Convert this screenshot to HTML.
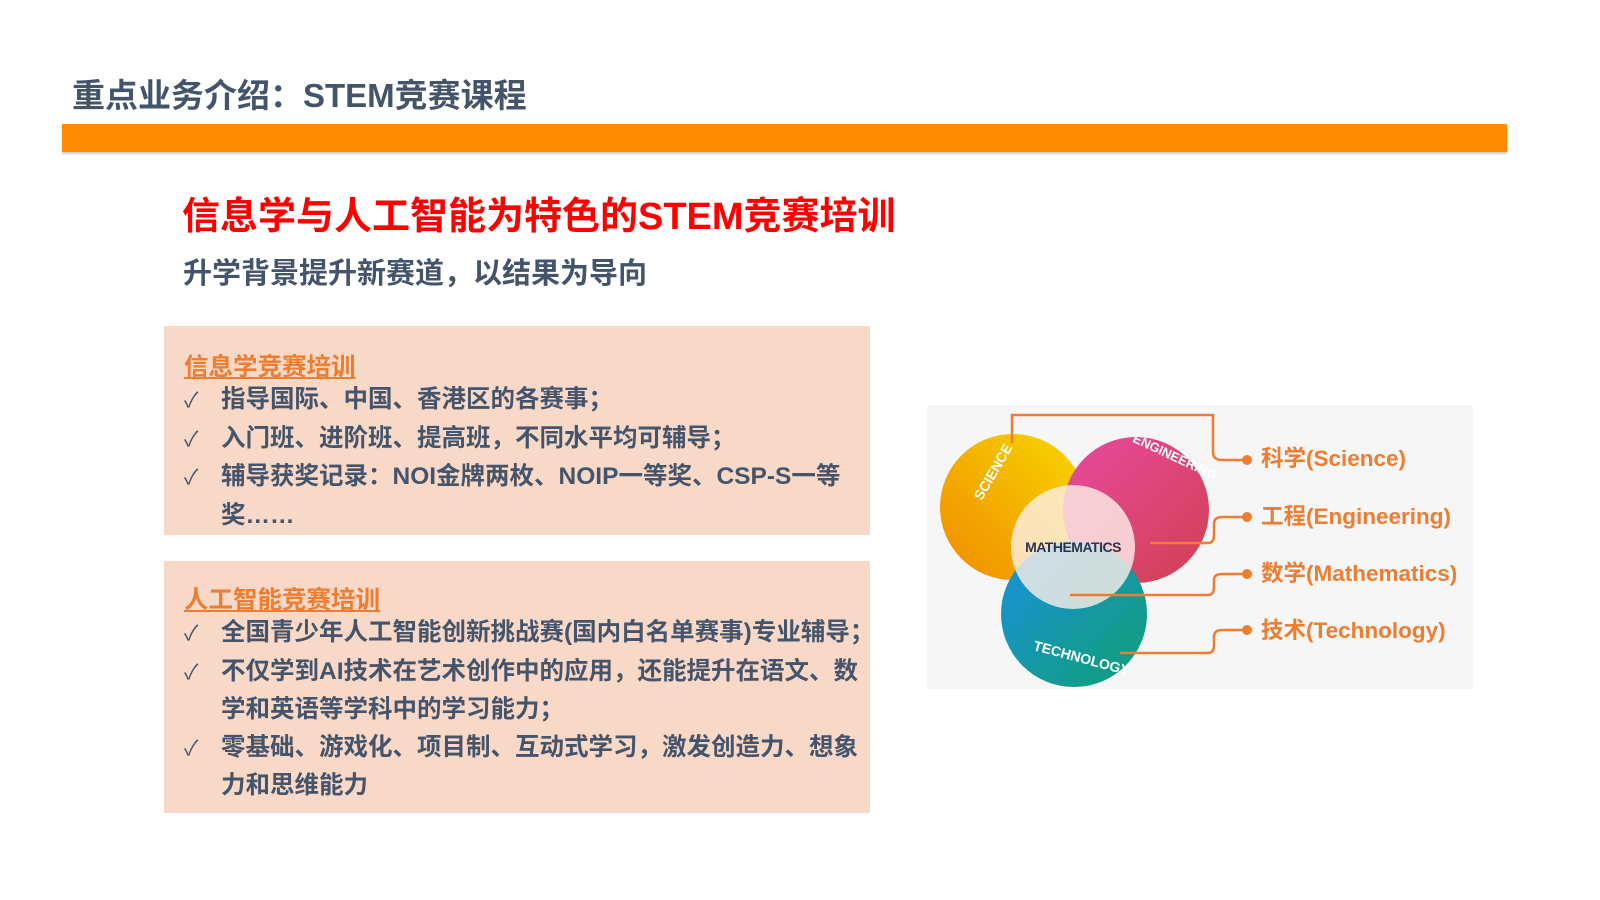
<!DOCTYPE html>
<html><head><meta charset="utf-8"><style>
body{margin:0;width:1600px;height:900px;background:#fff;position:relative;overflow:hidden;font-family:"Liberation Sans","Noto Sans CJK SC",sans-serif;font-weight:bold}
.a{position:absolute;white-space:nowrap}
.box{position:absolute;left:164px;width:706px;background:#f8d9c8}
.h{color:#ed7d31;text-decoration:underline;font-size:24.5px;position:absolute;left:20px}
.li{position:absolute;left:20px;font-size:24.5px;color:#44546a;line-height:37.5px;white-space:nowrap}
.li span{display:inline-block;width:37px;font-weight:normal;font-size:21px}
</style></head><body>
<div class="a" style="left:72px;top:69px;font-size:33px;color:#44546a">重点业务介绍：STEM竞赛课程</div>
<div class="a" style="left:62px;top:124px;width:1445px;height:28px;background:#ff8b00;box-shadow:0 2px 2px rgba(0,0,0,.2)"></div>
<div class="a" style="left:182px;top:185px;font-size:38px;color:#ff0000">信息学与人工智能为特色的STEM竞赛培训</div>
<div class="a" style="left:183px;top:250px;font-size:29px;color:#44546a">升学背景提升新赛道，以结果为导向</div>
<div class="box" style="top:326px;height:209px">
<div class="h" style="top:22px">信息学竞赛培训</div>
<div class="li" style="top:55px"><span>✓</span>指导国际、中国、香港区的各赛事；<br><span>✓</span>入门班、进阶班、提高班，不同水平均可辅导；<br><span>✓</span>辅导获奖记录：NOI金牌两枚、NOIP一等奖、CSP-S一等<br><span></span>奖……</div>
</div>
<div class="box" style="top:561px;height:252px">
<div class="h" style="top:20px">人工智能竞赛培训</div>
<div class="li" style="top:53px"><span>✓</span>全国青少年人工智能创新挑战赛(国内白名单赛事)专业辅导；<br><span>✓</span>不仅学到AI技术在艺术创作中的应用，还能提升在语文、数<br><span></span>学和英语等学科中的学习能力；<br><span>✓</span>零基础、游戏化、项目制、互动式学习，激发创造力、想象<br><span></span>力和思维能力</div>
</div>
<svg class="a" style="left:927px;top:405px" width="546" height="284" viewBox="927 405 546 284">
<defs>
<linearGradient id="s" x1="0" y1="1" x2="1" y2="0"><stop offset="0" stop-color="#f08a00"/><stop offset="1" stop-color="#f8d800"/></linearGradient>
<linearGradient id="e" x1="0" y1="0" x2="1" y2="1"><stop offset="0" stop-color="#e94aa0"/><stop offset="1" stop-color="#d04050"/></linearGradient>
<linearGradient id="t" x1="0" y1="0" x2="1" y2="1"><stop offset="0" stop-color="#1a90e0"/><stop offset="1" stop-color="#10a070"/></linearGradient>
</defs>
<rect x="927" y="405" width="546" height="284" fill="#f6f6f6"/>
<circle cx="1013" cy="507" r="73" fill="url(#s)"/>
<circle cx="1136" cy="510" r="73" fill="url(#e)"/>
<circle cx="1074" cy="614" r="73" fill="url(#t)"/>
<circle cx="1073" cy="547" r="62" fill="#fdf0e8" opacity=".8"/>
<text x="1073" y="552" font-size="14" fill="#2a3450" text-anchor="middle" letter-spacing="-0.5">MATHEMATICS</text>
<text x="955" y="505" font-size="14" fill="#fff" transform="rotate(-60 965 480)">SCIENCE</text>
<text x="1130" y="450" font-size="13" fill="#fff" transform="rotate(25 1150 450)">ENGINEERING</text>
<text x="1030" y="660" font-size="14" fill="#fff" transform="rotate(15 1070 665)">TECHNOLOGY</text>
<g fill="none" stroke="#ed7d31" stroke-width="2.5">
<path d="M1012 443V415H1213V452Q1213 460 1222 460H1246"/>
<path d="M1150 543H1208Q1214 543 1214 535V524Q1214 517 1222 517H1246"/>
<path d="M1070 595H1208Q1214 595 1214 587V580Q1214 574 1222 574H1246"/>
<path d="M1120 653H1208Q1214 653 1214 645V637Q1214 630 1222 630H1246"/>
</g>
<g fill="#ed7d31"><circle cx="1247" cy="460" r="5"/><circle cx="1247" cy="517" r="5"/><circle cx="1247" cy="574" r="5"/><circle cx="1247" cy="630" r="5"/></g>
<g fill="#ed7d31" font-size="22.5">
<text x="1261" y="466">科学(Science)</text>
<text x="1261" y="524">工程(Engineering)</text>
<text x="1261" y="581">数学(Mathematics)</text>
<text x="1261" y="638">技术(Technology)</text>
</g>
</svg>
</body></html>
